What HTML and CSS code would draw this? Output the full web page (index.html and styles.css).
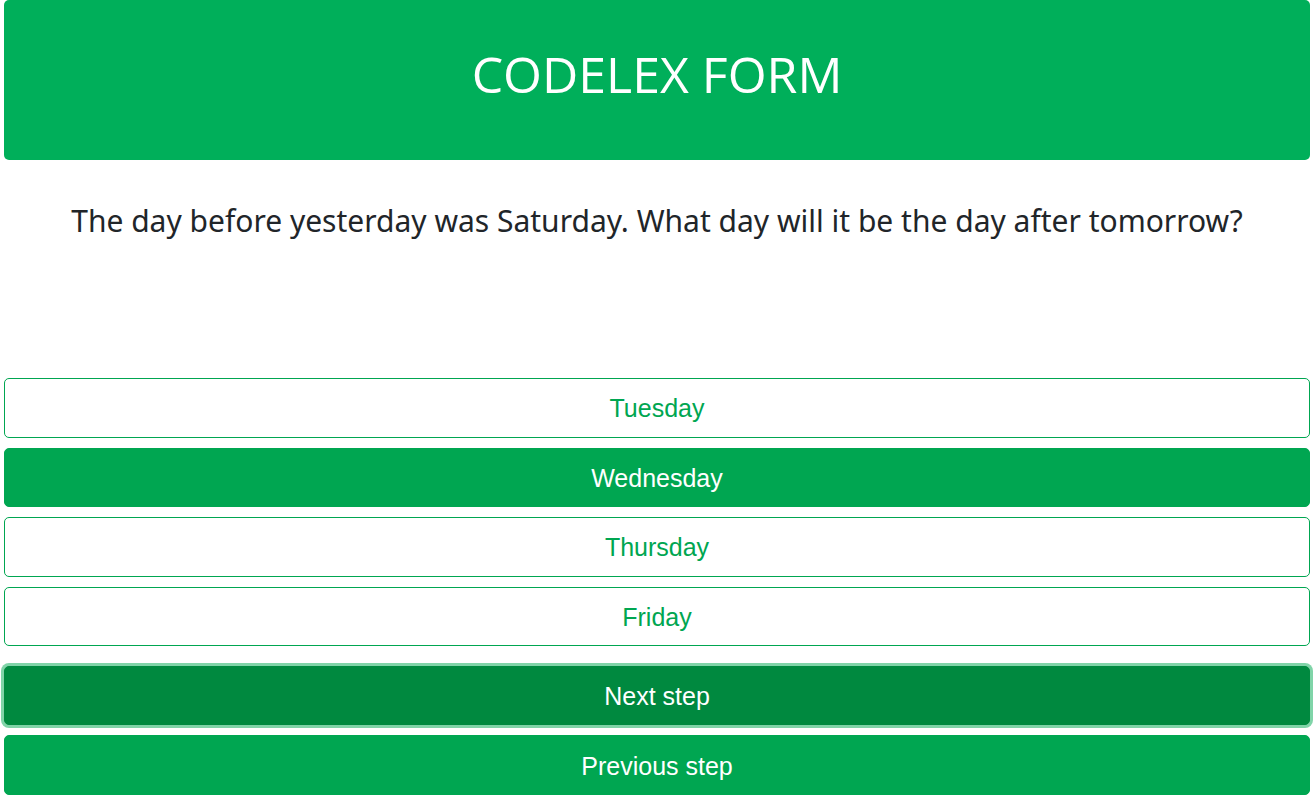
FILE: index.html
```html
<!DOCTYPE html>
<html lang="en">
<head>
<meta charset="utf-8">
<title>Codelex Form</title>
<link rel="stylesheet" href="styles.css">
</head>
<body>
<div class="page">
  <header class="header"><h1 class="title">CODELEX FORM</h1></header>
  <p class="question">The day before yesterday was Saturday. What day will it be the day after tomorrow?</p>
  <div class="options">
    <button class="option">Tuesday</button>
    <button class="option selected">Wednesday</button>
    <button class="option">Thursday</button>
    <button class="option">Friday</button>
  </div>
  <div class="nav">
    <button class="step next">Next step</button>
    <button class="step">Previous step</button>
  </div>
</div>
</body>
</html>
```
FILE: styles.css
```css
html, body { margin: 0; padding: 0; background: #fff; }
.page { padding: 0 4px; display: flex; flex-direction: column; }
.header {
  background: #00af5a;
  border-radius: 5px;
  height: 160px;
  box-sizing: border-box;
  padding-bottom: 12px;
  display: flex; align-items: center; justify-content: center;
}
.title {
  margin: 0;
  color: #fff;
  font-family: "Open Sans", sans-serif;
  font-weight: 400;
  font-size: 50px;
  line-height: 60px;
}
.question {
  margin: 0;
  height: 218px;
  padding-top: 42px;
  box-sizing: border-box;
  text-align: center;
  color: #212529;
  font-family: "Noto Sans", sans-serif;
  font-size: 30px;
  line-height: 38px;
}
.options { display: flex; flex-direction: column; gap: 10px; }
.option, .step {
  font-family: "Liberation Sans", Arial, sans-serif;
  font-size: 25px;
  height: 59.5px;
  border-radius: 5px;
  border: 1px solid #00a651;
  background: #fff;
  color: #00a651;
  width: 100%;
  padding: 2px 0 0;
}
.option.selected { background: #00a651; color: #fff; }
.nav { display: flex; flex-direction: column; gap: 10px; margin-top: 20px; }
.step { background: #00a651; color: #fff; height: 60px; }
.step.next {
  background: #00893f;
  border-color: #00893f;
  height: 59px;
  box-shadow: 0 0 0 3px #80d4a8;
}
```
